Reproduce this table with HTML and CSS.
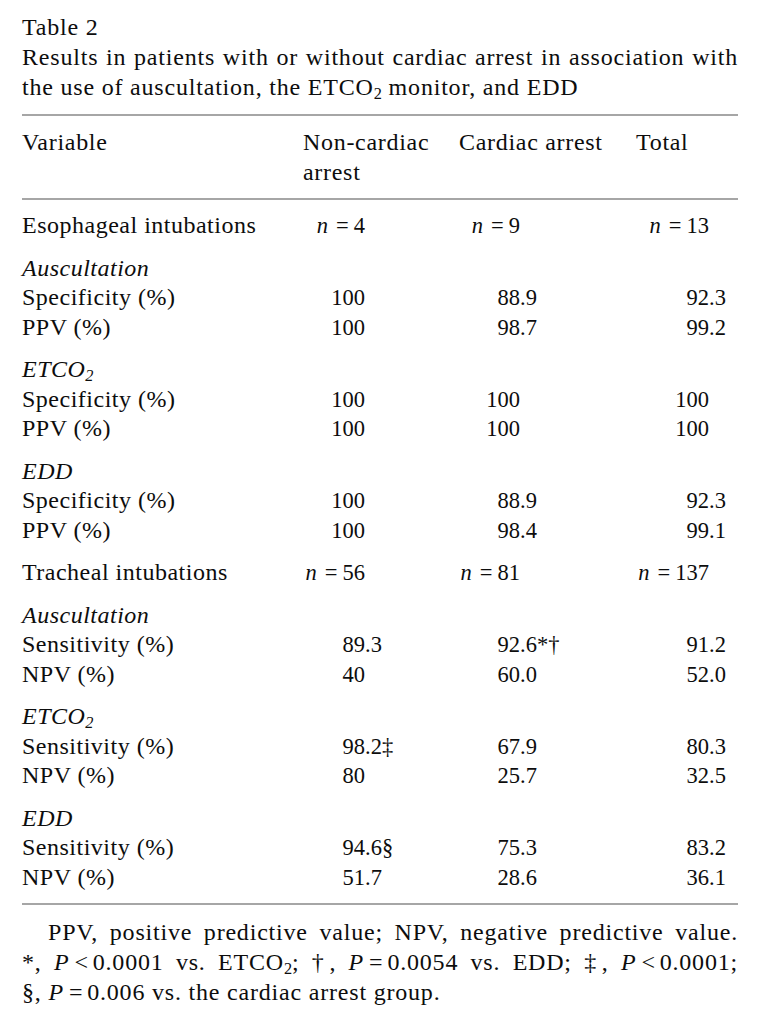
FILE: index.html
```html
<!DOCTYPE html>
<html lang="en">
<head>
<meta charset="utf-8">
<title>Table 2</title>
<link rel="stylesheet" href="styles.css">
</head>
<body>
<div class="page">
  <div class="caption">
    <div class="label">Table 2</div>
    <p class="title">Results in patients with or without cardiac arrest in association with the use of auscultation, the ETCO<sub>2</sub> monitor, and EDD</p>
  </div>

  <div class="rule"></div>

  <div class="row head">
    <div>Variable</div>
    <div>Non-cardiac<br>arrest</div>
    <div>Cardiac arrest</div>
    <div>Total</div>
  </div>

  <div class="rule rule-mid"></div>

  <div class="body">
    <div class="row">
      <div>Esophageal intubations</div>
      <div class="cell"><span class="int"><i>n</i><span class="op">=</span>4</span></div>
      <div class="cell"><span class="int"><i>n</i><span class="op">=</span>9</span></div>
      <div class="cell"><span class="int"><i>n</i><span class="op">=</span>13</span></div>
    </div>

    <div class="row group"><div><i>Auscultation</i></div></div>
    <div class="row">
      <div>Specificity (%)</div>
      <div class="cell"><span class="int">100</span></div>
      <div class="cell"><span class="int">88</span>.9</div>
      <div class="cell"><span class="int">92</span>.3</div>
    </div>
    <div class="row">
      <div>PPV (%)</div>
      <div class="cell"><span class="int">100</span></div>
      <div class="cell"><span class="int">98</span>.7</div>
      <div class="cell"><span class="int">99</span>.2</div>
    </div>

    <div class="row group"><div><i>ETCO<sub>2</sub></i></div></div>
    <div class="row">
      <div>Specificity (%)</div>
      <div class="cell"><span class="int">100</span></div>
      <div class="cell"><span class="int">100</span></div>
      <div class="cell"><span class="int">100</span></div>
    </div>
    <div class="row">
      <div>PPV (%)</div>
      <div class="cell"><span class="int">100</span></div>
      <div class="cell"><span class="int">100</span></div>
      <div class="cell"><span class="int">100</span></div>
    </div>

    <div class="row group"><div><i>EDD</i></div></div>
    <div class="row">
      <div>Specificity (%)</div>
      <div class="cell"><span class="int">100</span></div>
      <div class="cell"><span class="int">88</span>.9</div>
      <div class="cell"><span class="int">92</span>.3</div>
    </div>
    <div class="row">
      <div>PPV (%)</div>
      <div class="cell"><span class="int">100</span></div>
      <div class="cell"><span class="int">98</span>.4</div>
      <div class="cell"><span class="int">99</span>.1</div>
    </div>

    <div class="row group">
      <div>Tracheal intubations</div>
      <div class="cell"><span class="int"><i>n</i><span class="op">=</span>56</span></div>
      <div class="cell"><span class="int"><i>n</i><span class="op">=</span>81</span></div>
      <div class="cell"><span class="int"><i>n</i><span class="op">=</span>137</span></div>
    </div>

    <div class="row group"><div><i>Auscultation</i></div></div>
    <div class="row">
      <div>Sensitivity (%)</div>
      <div class="cell"><span class="int">89</span>.3</div>
      <div class="cell"><span class="int">92</span>.6*†</div>
      <div class="cell"><span class="int">91</span>.2</div>
    </div>
    <div class="row">
      <div>NPV (%)</div>
      <div class="cell"><span class="int">40</span></div>
      <div class="cell"><span class="int">60</span>.0</div>
      <div class="cell"><span class="int">52</span>.0</div>
    </div>

    <div class="row group"><div><i>ETCO<sub>2</sub></i></div></div>
    <div class="row">
      <div>Sensitivity (%)</div>
      <div class="cell"><span class="int">98</span>.2‡</div>
      <div class="cell"><span class="int">67</span>.9</div>
      <div class="cell"><span class="int">80</span>.3</div>
    </div>
    <div class="row">
      <div>NPV (%)</div>
      <div class="cell"><span class="int">80</span></div>
      <div class="cell"><span class="int">25</span>.7</div>
      <div class="cell"><span class="int">32</span>.5</div>
    </div>

    <div class="row group"><div><i>EDD</i></div></div>
    <div class="row">
      <div>Sensitivity (%)</div>
      <div class="cell"><span class="int">94</span>.6§</div>
      <div class="cell"><span class="int">75</span>.3</div>
      <div class="cell"><span class="int">83</span>.2</div>
    </div>
    <div class="row">
      <div>NPV (%)</div>
      <div class="cell"><span class="int">51</span>.7</div>
      <div class="cell"><span class="int">28</span>.6</div>
      <div class="cell"><span class="int">36</span>.1</div>
    </div>
  </div>

  <div class="rule rule-end"></div>

  <div class="notes">
    <p class="note first">PPV, positive predictive value; NPV, negative predictive value.</p>
    <p class="note">*, <i>P</i><span class="op sm">&lt;</span>0.0001 vs. ETCO<sub>2</sub>; <span class="mk">†</span>, <i>P</i><span class="op sm">=</span>0.0054 vs. EDD; <span class="mk">‡</span>, <i>P</i><span class="op sm">&lt;</span>0.0001; §,&nbsp;<i>P</i><span class="op sm">=</span>0.006 vs. the cardiac arrest group.</p>
  </div>
</div>
</body>
</html>
```

FILE: styles.css
```css
html, body {
  margin: 0;
  padding: 0;
  background: #ffffff;
}

body {
  font-family: "Liberation Serif", "Times New Roman", serif;
  font-size: 24px;
  letter-spacing: 0.5px;
  color: #0d0d0d;
}

.page {
  width: 716px;
  padding: 12px 0 0 22px;
}

.caption {
  line-height: 30px;
  letter-spacing: 0.8px;
}

.title {
  margin: 0;
  text-align: justify;
}

sub {
  font-size: 68%;
  line-height: 0;
  vertical-align: -0.25em;
  letter-spacing: 0;
}

.rule {
  height: 2px;
  background: #a6a6a6;
  margin-top: 12px;
}

.rule-mid {
  margin-top: 11px;
}

.rule-end {
  margin-top: 11px;
}

.row {
  display: grid;
  grid-template-columns: 281px 156px 177px 1fr;
  line-height: 29.5px;
}

.head {
  line-height: 30px;
  margin-top: 11px;
  letter-spacing: 0.7px;
}

.body {
  margin-top: 11px;
}

.group {
  margin-top: 13px;
}

.cell {
  white-space: nowrap;
  letter-spacing: 0;
  font-size: 22.5px;
}

.int {
  display: inline-block;
  text-align: right;
}

.op {
  margin: 0 5px 0 8px;
}

.op.sm {
  margin: 0 4px 0 5px;
}

.mk {
  letter-spacing: 0;
}

.cell:nth-child(2) .int {
  width: 62px;
}

.cell:nth-child(3) .int {
  width: 61px;
}

.cell:nth-child(4) .int {
  width: 73px;
}

.notes {
  margin-top: 12px;
  line-height: 30px;
  letter-spacing: 0.8px;
}

.note {
  margin: 0;
  text-align: justify;
}

.note.first {
  text-indent: 26px;
  text-align-last: justify;
}
```
